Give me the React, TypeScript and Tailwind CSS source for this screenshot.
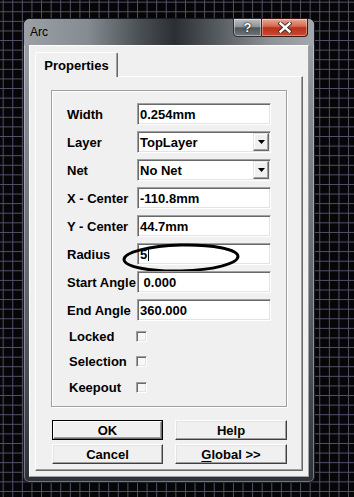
import React from 'react';

const sans = "font-['Liberation_Sans',Arial,sans-serif]";

function TextBox({ value, children }: { value: string; children?: React.ReactNode }) {
  return (
    <div className="relative flex h-[22px] w-[134px] items-center border border-t-[#a0a0a0] border-l-[#a0a0a0] border-b-white border-r-white bg-white pl-[2px] shadow-[inset_1px_1px_0_#696969,inset_-1px_-1px_0_#e3e3e3]">
      <span className="whitespace-pre text-[13px] font-bold leading-none text-black">{value}</span>
      {children}
    </div>
  );
}

function DropArrow() {
  return (
    <div className="mr-px ml-auto flex h-[18px] w-[16px] items-center justify-center border border-t-[#e3e3e3] border-l-[#e3e3e3] border-b-[#696969] border-r-[#696969] bg-[#f0f0f0] shadow-[inset_-1px_-1px_0_#a0a0a0,inset_1px_1px_0_#fff]">
      <svg width="7" height="4" viewBox="0 0 7 4">
        <path d="M0 0h7L3.5 4z" fill="#000" />
      </svg>
    </div>
  );
}

function Field({ label, value, select, children }: { label: string; value: string; select?: boolean; children?: React.ReactNode }) {
  return (
    <div className="relative flex h-[22px] items-center">
      <span className="w-[70px] whitespace-nowrap text-[13px] font-bold leading-none text-black">{label}</span>
      <TextBox value={value}>{select ? <DropArrow /> : null}</TextBox>
      {children}
    </div>
  );
}

function Check({ label }: { label: string }) {
  return (
    <div className="flex h-[20px] items-center">
      <span className="w-[69px] pl-[2px] text-[13px] font-bold leading-none text-black">{label}</span>
      <div className="h-[11px] w-[11px] border border-t-[#a0a0a0] border-l-[#a0a0a0] border-b-white border-r-white bg-[#f7f7f7] shadow-[inset_1px_1px_0_#696969,inset_-1px_-1px_0_#e3e3e3]" />
    </div>
  );
}

function Btn({ children, width, def }: { children: React.ReactNode; width: string; def?: boolean }) {
  if (def) {
    return (
      <div className={`h-[20px] ${width} border border-black`}>
        <div className="flex h-full items-center justify-center border border-t-white border-l-white border-b-[#696969] border-r-[#696969] bg-[#f0f0f0] shadow-[inset_-1px_-1px_0_#a0a0a0]">
          <span className="text-[13px] font-bold leading-none text-black">{children}</span>
        </div>
      </div>
    );
  }
  return (
    <div className={`flex h-[20px] ${width} items-center justify-center border border-t-white border-l-white border-b-[#404040] border-r-[#404040] bg-[#f0f0f0] shadow-[inset_-1px_-1px_0_#a0a0a0,inset_1px_1px_0_#e3e3e3]`}>
      <span className="text-[13px] font-bold leading-none text-black">{children}</span>
    </div>
  );
}

export default function App() {
  return (
    <div
      className={`h-[497px] w-[354px] overflow-hidden bg-[#060608] bg-[linear-gradient(to_right,#54526a_1px,transparent_1px),linear-gradient(to_bottom,#54526a_1px,transparent_1px)] [background-size:9.6px_9.6px] [background-position:2.7px_1.7px] pt-[18px] pl-[23px] ${sans}`}
    >
      {/* window frame */}
      <div className="h-[465px] w-[292px] rounded-t-[7px] rounded-b-[6px] border border-[#1a1d21] bg-[linear-gradient(to_bottom,#a3a8ad_0%,#8a8f95_15%,#62686e_55%,#2c3238_100%)] shadow-[inset_0_0_0_1px_rgba(255,255,255,0.35)]">
        {/* title bar */}
        <div className="flex h-[26px] items-start rounded-t-[6px] bg-[linear-gradient(to_right,#9aa0a5_0%,#868b91_22%,#4a4f54_40%,#2b2f34_52%,#5a5f64_68%,#8e9397_85%,#a4a8ac_100%)]">
          <span className="mt-[6px] ml-[6px] text-[12px] leading-[14px] text-black">Arc</span>
          <div className="-mt-px mr-[6px] ml-auto flex h-[19px]">
            <div className="flex w-[29px] items-center justify-center rounded-bl-[4px] border border-[#2a2d31] bg-[linear-gradient(to_bottom,#bcc0c4_0%,#8e9398_45%,#50555a_52%,#70757a_100%)] shadow-[inset_0_0_0_1px_rgba(255,255,255,0.4)]">
              <span className="text-[13px] font-bold leading-none text-white [text-shadow:0_0_2px_#000,0_0_1px_#000]">?</span>
            </div>
            <div className="flex w-[46px] items-center justify-center rounded-br-[4px] border border-l-0 border-[#3a1a14] bg-[linear-gradient(to_bottom,#e9a897_0%,#d46b52_42%,#b8321a_52%,#cb4a2e_100%)] shadow-[inset_0_0_0_1px_rgba(255,255,255,0.35)]">
              <svg width="14" height="11" viewBox="0 0 14 11">
                <path d="M2.5 1.5L11.5 9.5M11.5 1.5L2.5 9.5" stroke="#3b2a28" strokeWidth="4.2" strokeLinecap="square" />
                <path d="M2.5 1.5L11.5 9.5M11.5 1.5L2.5 9.5" stroke="#fff" strokeWidth="2.4" strokeLinecap="square" />
              </svg>
            </div>
          </div>
        </div>

        {/* client area */}
        <div className="mx-[5px] h-[432px] border border-t-white border-l-white border-b-[#a0a0a0] border-r-[#a0a0a0] bg-[#f0f0f0] pt-[6px] pl-[5px]">
          {/* tab */}
          <div className="relative z-10 -mb-px flex h-[25px] w-[83px] items-center justify-center rounded-t-[2px] border border-b-0 border-t-white border-l-white border-r-[#696969] bg-[#f0f0f0] shadow-[inset_-1px_0_0_#a0a0a0]">
            <span className="text-[13px] font-bold leading-none text-black">Properties</span>
          </div>

          {/* tab panel */}
          <div className="h-[395px] w-[268px] border border-t-white border-l-white border-b-[#696969] border-r-[#696969] pt-[13px] pl-[15px] shadow-[inset_-1px_-1px_0_#a0a0a0]">
            {/* group box */}
            <div className="h-[317px] w-[236px] border border-[#a0a0a0] pt-[12px] pl-[15px] shadow-[inset_1px_1px_0_#fff,1px_1px_0_#fff]">
              <div className="flex flex-col gap-[6px]">
                <Field label="Width" value="0.254mm" />
                <Field label="Layer" value="TopLayer" select />
                <Field label="Net" value="No Net" select />
                <Field label="X - Center" value="-110.8mm" />
                <Field label="Y - Center" value="44.7mm" />
                <div className="relative flex h-[22px] items-center">
                  <span className="w-[70px] text-[13px] font-bold leading-none text-black">Radius</span>
                  <div className="flex h-[22px] w-[134px] items-center border border-t-[#a0a0a0] border-l-[#a0a0a0] border-b-white border-r-white bg-white pl-[2px] shadow-[inset_1px_1px_0_#696969,inset_-1px_-1px_0_#e3e3e3]">
                    <span className="text-[13px] font-bold leading-none text-black">5</span>
                    <span className="ml-px h-[14px] w-px bg-black" />
                  </div>
                  <svg className="pointer-events-none absolute top-[0px] left-[55px]" width="118" height="30" viewBox="0 0 118 30">
                    <ellipse cx="59" cy="15" rx="57" ry="13" fill="none" stroke="#000" strokeWidth="3" transform="rotate(-1.5 59 15)" />
                  </svg>
                </div>
                <Field label="Start Angle" value=" 0.000" />
                <Field label="End Angle" value="360.000" />
              </div>
              <div className="mt-[5px]">
                <Check label="Locked" />
              </div>
              <div className="mt-[5px]">
                <Check label="Selection" />
              </div>
              <div className="mt-[6px]">
                <Check label="Keepout" />
              </div>
            </div>

            {/* buttons */}
            <div className="mt-[13px] flex flex-col gap-[4px] pl-px">
              <div className="flex gap-[12px]">
                <Btn width="w-[111px]" def>OK</Btn>
                <Btn width="w-[112px]">Help</Btn>
              </div>
              <div className="flex gap-[12px]">
                <Btn width="w-[111px]">Cancel</Btn>
                <Btn width="w-[112px]">
                  <span className="underline underline-offset-2">G</span>lobal &gt;&gt;
                </Btn>
              </div>
            </div>
          </div>
        </div>
      </div>
    </div>
  );
}
